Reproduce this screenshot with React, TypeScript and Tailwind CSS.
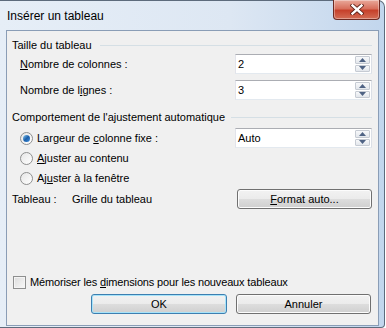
import React from "react";

const font = { fontFamily: '"Segoe UI", "Liberation Sans", Arial, sans-serif' };

function Spin() {
    return (
        <div className="flex flex-col w-[15px] h-[16px] mr-[1px] gap-[1px]">
            {[0, 1].map((i) => (
                <div
                    key={i}
                    className="flex-1 flex items-center justify-center border border-[#c6cbd3] rounded-[1px] bg-gradient-to-b from-[#f7f8fa] to-[#e3e7ec]"
                >
                    <svg width="7" height="4" viewBox="0 0 7 4">
                        {i === 0 ? <path d="M0 4 L3.5 0 L7 4 Z" fill="#4f6384" /> : <path d="M0 0 L3.5 4 L7 0 Z" fill="#4f6384" />}
                    </svg>
                </div>
            ))}
        </div>
    );
}

function SpinBox({ value }: { value: string }) {
    return (
        <div className="w-[137px] h-[20px] flex items-center bg-white border border-[#abadb3] border-r-[#dbdfe6] border-b-[#e3e9ef] border-l-[#e2e3ea]">
            <span className="flex-1 pl-[2px] text-[11px] text-black">{value}</span>
            <Spin />
        </div>
    );
}

function Radio({ checked }: { checked?: boolean }) {
    return (
        <div className="w-[13px] h-[13px] rounded-full border border-[#8e8f8f] bg-gradient-to-br from-[#e6e6e6] to-[#ffffff] flex items-center justify-center">
            {checked && <div className="w-[7px] h-[7px] rounded-full bg-gradient-to-br from-[#8ad0f6] via-[#1c5fa8] to-[#3a8de0]" />}
        </div>
    );
}

function Btn({ label, primary }: { label: React.ReactNode; primary?: boolean }) {
    return (
        <button
            className={`h-[20px] rounded-[3px] border text-[11px] text-black flex items-center justify-center ${primary
                ? "w-[136px] border-[#3c7fb1] shadow-[inset_0_0_0_1px_#a7e3f9]"
                : "w-[135px] border-[#707070] shadow-[inset_0_0_0_1px_#fcfcfc]"
                } bg-[linear-gradient(#f2f2f2_0%,#ebebeb_50%,#dddddd_51%,#cfcfcf_100%)]`}
        >
            {label}
        </button>
    );
}

export default function App() {
    return (
        <div className="w-[386px] h-[328px] overflow-hidden bg-white" style={font}>
            <div className="relative w-[385px] h-[328px] rounded-tr-[7px] rounded-br-[4px] border-t border-r border-b border-[#5d6b7c] bg-[linear-gradient(90deg,#e6eef7_0%,#dde7f3_60%,#c2d6ed_100%)]">
                {/* Title bar */}
                <div className="h-[29px] flex items-center pl-[7px] text-[12px] text-black">Insérer un tableau</div>

                {/* Close button */}
                <div className="absolute left-[333px] top-[-1px] w-[47px] h-[20px] rounded-b-[4px] border border-[#6d2a22] border-t-0 bg-[linear-gradient(#e9a99b_0%,#d8705d_45%,#c6412b_55%,#d36d55_100%)] flex items-center justify-center shadow-[inset_0_0_0_1px_rgba(255,255,255,0.35)]">
                    <svg width="14" height="11" viewBox="0 0 14 11">
                        <path d="M2.5 1.5 L11.5 9.5 M11.5 1.5 L2.5 9.5" stroke="#5a1f16" strokeWidth="4.2" strokeLinecap="square" />
                        <path d="M2.5 1.5 L11.5 9.5 M11.5 1.5 L2.5 9.5" stroke="#ffffff" strokeWidth="2.4" strokeLinecap="square" />
                    </svg>
                </div>

                {/* Client area */}
                <div className="ml-[6px] w-[373px] h-[296px] border border-[#8a9db6] bg-[#f0f0f0] pl-[5px] pr-[6px] text-[11px] text-black">
                    {/* Taille du tableau */}
                    <div className="mt-[7px] h-[15px] flex items-center">
                        <span>Taille du tableau</span>
                        <div className="flex-1 ml-[8px] border-t border-[#d5dfe5]" />
                    </div>
                    <div className="mt-[1px] h-[20px] flex items-center justify-between pl-[8px]">
                        <span><u>N</u>ombre de colonnes :</span>
                        <SpinBox value="2" />
                    </div>
                    <div className="mt-[6px] h-[20px] flex items-center justify-between pl-[8px]">
                        <span>Nombre de l<u>i</u>gnes :</span>
                        <SpinBox value="3" />
                    </div>

                    {/* Comportement */}
                    <div className="mt-[10px] h-[15px] flex items-center">
                        <span>Comportement de l'ajustement automatique</span>
                        <div className="flex-1 ml-[6px] border-t border-[#d5dfe5]" />
                    </div>
                    <div className="mt-[3px] h-[20px] flex items-center justify-between pl-[8px]">
                        <div className="flex items-center gap-[4px]">
                            <Radio checked />
                            <span>Largeur de <u>c</u>olonne fixe :</span>
                        </div>
                        <SpinBox value="Auto" />
                    </div>
                    <div className="h-[20px] flex items-center gap-[4px] pl-[8px]">
                        <Radio />
                        <span><u>A</u>juster au contenu</span>
                    </div>
                    <div className="h-[20px] flex items-center gap-[4px] pl-[8px]">
                        <Radio />
                        <span>Aj<u>u</u>ster à la fenêtre</span>
                    </div>
                    <div className="mt-[1px] h-[20px] flex items-center">
                        <span className="w-[60px]">Tableau :</span>
                        <span className="flex-1">Grille du tableau</span>
                        <Btn label={<span><u>F</u>ormat auto...</span>} />
                    </div>

                    {/* Checkbox */}
                    <div className="mt-[65px] h-[16px] flex items-center gap-[4px] pl-[1px]">
                        <div className="w-[13px] h-[13px] border border-[#8e8f8f] bg-gradient-to-br from-[#dcdcdc] to-[#f8f8f8] shadow-[inset_0_0_0_1px_#f4f4f4]" />
                        <span className="tracking-[-0.15px]">Mémoriser les <u>d</u>imensions pour les nouveaux tableaux</span>
                    </div>
                    <div className="mt-[4px] flex justify-end gap-[9px] pr-[1px]">
                        <Btn label="OK" primary />
                        <Btn label="Annuler" />
                    </div>
                </div>
            </div>
        </div>
    );
}
